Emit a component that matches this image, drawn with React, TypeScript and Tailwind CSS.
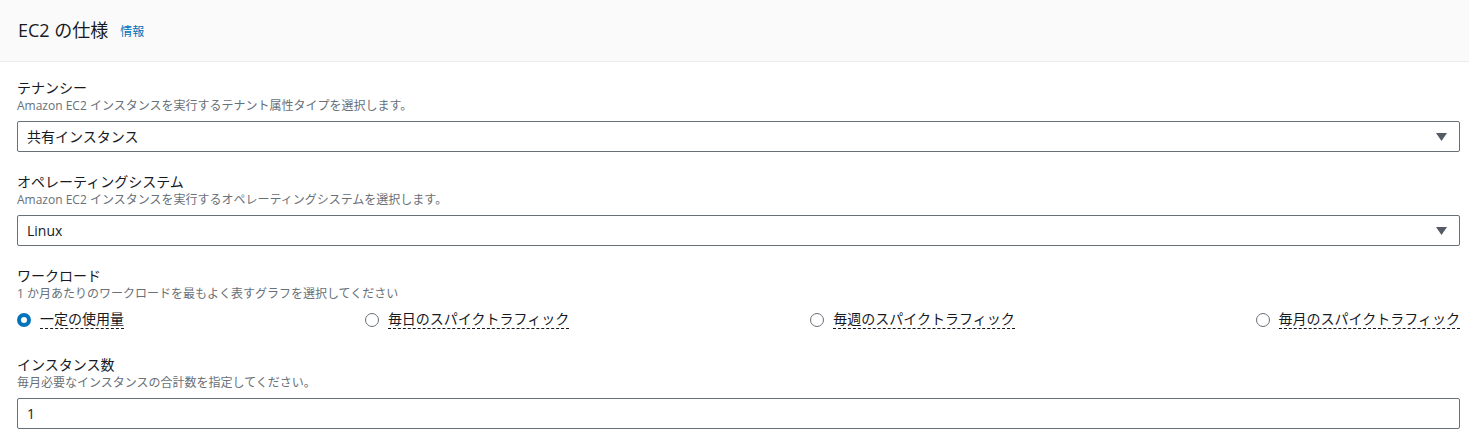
const FONT = "font-['Open_Sans','Noto_Sans_CJK_JP',sans-serif]"

type FieldProps = {
  label: string
  description: string
  children: React.ReactNode
}

function Field({ label, description, children }: FieldProps) {
  return (
    <div className="flex flex-col">
      <div className="text-[14px] leading-5 text-[#16191f]">{label}</div>
      <div className="text-[12px] leading-4 text-[#687078]">{description}</div>
      <div className="mt-[7px]">{children}</div>
    </div>
  )
}

function SelectBox({ value }: { value: string }) {
  return (
    <div className="flex h-[31px] items-center justify-between rounded-[2px] border border-[#687078] bg-white pl-[9px] pr-[12px]">
      <span className="text-[14px] text-[#16191f]">{value}</span>
      <svg width="11" height="8" viewBox="0 0 11 8" aria-hidden="true">
        <path d="M0 0 H11 L5.5 8 Z" fill="#545b64" />
      </svg>
    </div>
  )
}

function Radio({ label, checked }: { label: string; checked?: boolean }) {
  return (
    <label className="flex items-center gap-[9px]">
      {checked ? (
        <span className="block h-[14px] w-[14px] rounded-full border-[4px] border-[#0073bb] bg-white" />
      ) : (
        <span className="block h-[14px] w-[14px] rounded-full border-[1.5px] border-[#687078] bg-white" />
      )}
      <span className="border-b border-dashed border-[#16191f] text-[14px] leading-[18px] text-[#16191f]">
        {label}
      </span>
    </label>
  )
}

export default function App() {
  return (
    <div className={`${FONT} min-h-[434px] w-full bg-white`}>
      {/* Header */}
      <div className="flex h-[62px] items-center border-b border-[#eaeded] bg-[#fafafa] px-[18px]">
        <h2 className="text-[18px] font-normal text-[#16191f]">EC2 の仕様</h2>
        <a href="#" className="ml-[12px] mt-[2px] text-[12px] text-[#0073bb]">
          情報
        </a>
      </div>

      {/* Body */}
      <div className="flex flex-col gap-5 pl-[17px] pr-[9px] pt-[16px]">
        <Field label="テナンシー" description="Amazon EC2 インスタンスを実行するテナント属性タイプを選択します。">
          <SelectBox value="共有インスタンス" />
        </Field>

        <Field label="オペレーティングシステム" description="Amazon EC2 インスタンスを実行するオペレーティングシステムを選択します。">
          <SelectBox value="Linux" />
        </Field>

        <div className="flex flex-col pb-[6px]">
          <div className="text-[14px] leading-5 text-[#16191f]">ワークロード</div>
          <div className="text-[12px] leading-4 text-[#687078]">
            1 か月あたりのワークロードを最もよく表すグラフを選択してください
          </div>
          <div className="mt-[8px] flex items-center justify-between">
            <Radio label="一定の使用量" checked />
            <Radio label="毎日のスパイクトラフィック" />
            <Radio label="毎週のスパイクトラフィック" />
            <Radio label="毎月のスパイクトラフィック" />
          </div>
        </div>

        <Field label="インスタンス数" description="毎月必要なインスタンスの合計数を指定してください。">
          <div className="flex h-[31px] items-center rounded-[2px] border border-[#687078] bg-white pl-[9px]">
            <span className="text-[14px] text-[#16191f]">1</span>
          </div>
        </Field>
      </div>
    </div>
  )
}
